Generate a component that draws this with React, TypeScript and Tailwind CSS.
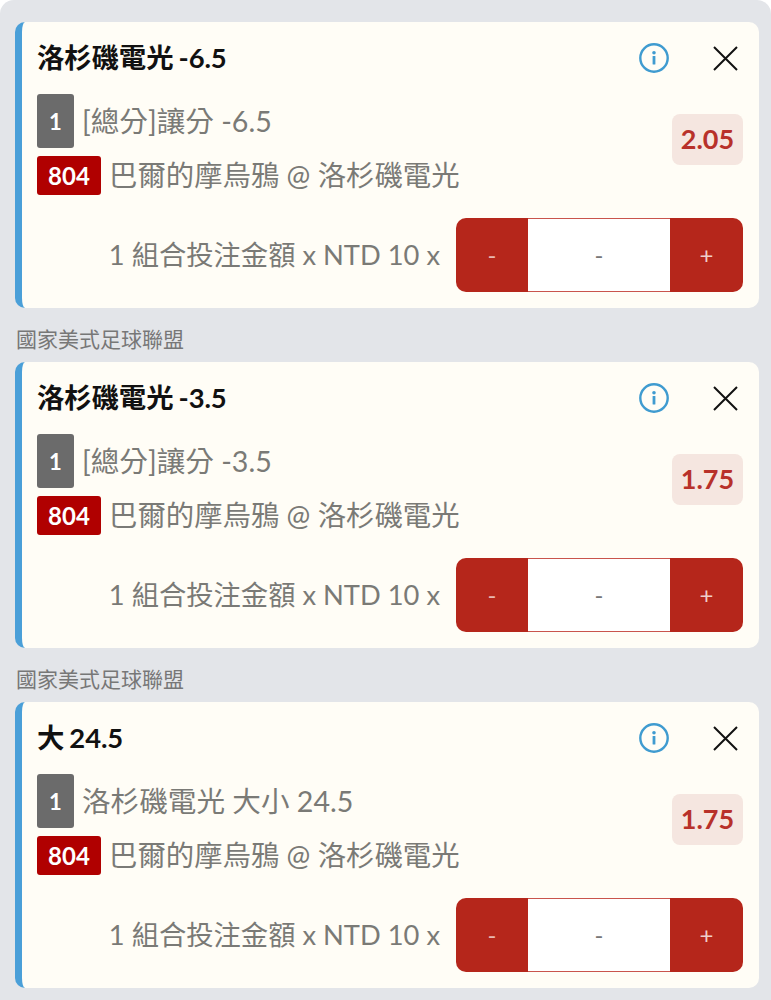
import React from "react";

const FONT = { fontFamily: '"Lato", "Noto Sans CJK TC", sans-serif' };

function InfoIcon() {
  return (
    <svg width="30" height="30" viewBox="0 0 30 30" fill="none">
      <circle cx="15" cy="15" r="13.7" stroke="#3f9bd0" strokeWidth="2.4" />
      <circle cx="15" cy="9.8" r="1.8" fill="#3f9bd0" />
      <rect x="13.6" y="13" width="2.8" height="8.5" rx="0.6" fill="#3f9bd0" />
    </svg>
  );
}

function CloseIcon() {
  return (
    <svg width="25" height="25" viewBox="0 0 25 25" fill="none">
      <path d="M1 1 L24 24 M24 1 L1 24" stroke="#111" strokeWidth="2" />
    </svg>
  );
}

function Card({ title, sub, odds }: { title: string; sub: string; odds: string }) {
  return (
    <div className="relative h-[286px] rounded-[10px] border-l-[7px] border-[#4a9fd8] bg-[#fffdf6]">
      <div className="flex h-[72px] items-center justify-between pl-[15px] pr-[21px]">
        <div className="text-[27.4px] font-bold leading-none tracking-[-0.1px] text-[#111] [word-spacing:-1.5px]">{title}</div>
        <div className="flex items-center gap-[44px]">
          <InfoIcon />
          <CloseIcon />
        </div>
      </div>
      <div className="flex items-center justify-between pl-[15px] pr-[16px]">
        <div className="flex flex-col gap-[8px]">
          <div className="flex items-center gap-[8px]">
            <div className="flex h-[54px] w-[37px] items-center justify-center rounded-[3px] bg-[#6b6b6b] text-[22px] font-bold text-white">1</div>
            <div className="text-[28.6px] leading-none text-[#7a7a76]">{sub}</div>
          </div>
          <div className="flex items-center gap-[8px]">
            <div className="flex h-[39px] w-[64px] items-center justify-center rounded-[3px] bg-[#b00000] text-[24px] font-bold text-white">804</div>
            <div className="text-[28.4px] leading-none text-[#7a7a76]">巴爾的摩烏鴉 @ 洛杉磯電光</div>
          </div>
        </div>
        <div className="mb-[10px] flex h-[51px] w-[71px] items-center justify-center rounded-[8px] bg-[#f5e6e0] text-[27px] font-bold text-[#b8312a]">{odds}</div>
      </div>
      <div className="flex items-center justify-end pr-[16px] pt-[23px]">
        <div className="mr-[16px] text-[27.3px] leading-none text-[#7a7a76]">1 組合投注金額 x NTD 10 x</div>
        <div className="flex h-[74px] w-[287px] overflow-hidden rounded-[10px] bg-[#b5261b] text-[24px]">
          <div className="flex w-[72px] items-center justify-center text-[#e9b7b0]">-</div>
          <div className="flex flex-1 items-center justify-center border-y border-[#c9544c] bg-white text-[#777]">-</div>
          <div className="flex w-[73px] items-center justify-center text-[#f0cfca]">+</div>
        </div>
      </div>
    </div>
  );
}

function Section() {
  return <div className="flex h-[54px] items-center pl-px pt-[7px] text-[21px] text-[#777]">國家美式足球聯盟</div>;
}

export default function App() {
  return (
    <div className="h-[1000px] w-[771px] overflow-hidden bg-white" style={FONT}>
      <div className="h-[1000px] rounded-t-[14px] bg-[#e3e5e9] pl-[15px] pr-[12px] pt-[22px]">
        <Card title="洛杉磯電光 -6.5" sub="[總分]讓分 -6.5" odds="2.05" />
        <Section />
        <Card title="洛杉磯電光 -3.5" sub="[總分]讓分 -3.5" odds="1.75" />
        <Section />
        <Card title="大 24.5" sub="洛杉磯電光 大小 24.5" odds="1.75" />
      </div>
    </div>
  );
}
